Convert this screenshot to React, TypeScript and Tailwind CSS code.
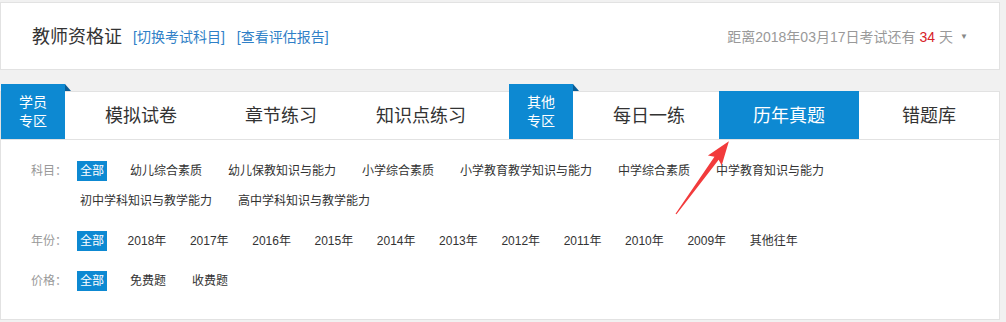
import React, { useState } from "react";

const BLUE = "bg-[#0d89d2]";

const subjects = [
  "全部",
  "幼儿综合素质",
  "幼儿保教知识与能力",
  "小学综合素质",
  "小学教育教学知识与能力",
  "中学综合素质",
  "中学教育知识与能力",
  "初中学科知识与教学能力",
  "高中学科知识与教学能力",
];

const years = [
  "全部",
  "2018年",
  "2017年",
  "2016年",
  "2015年",
  "2014年",
  "2013年",
  "2012年",
  "2011年",
  "2010年",
  "2009年",
  "其他往年",
];

const prices = ["全部", "免费题", "收费题"];

const ZoneLabel: React.FC<{ top: string; bottom: string }> = ({ top, bottom }) => (
  <div
    className={`relative -mt-[8px] flex h-[55px] w-[64px] shrink-0 flex-col items-center justify-center ${BLUE} text-[14px] leading-[19px] text-white`}
  >
    <span>{top}</span>
    <span>{bottom}</span>
    {/* folded corner */}
    <svg className="absolute left-full top-0" width="6" height="7" viewBox="0 0 6 7">
      <polygon points="0,0 6,7 0,7" fill="#0a5d96" />
    </svg>
  </div>
);

const FilterRow: React.FC<{
  label: string;
  items: string[];
  gap: string;
  selected: string;
  onSelect: (v: string) => void;
}> = ({ label, items, gap, selected, onSelect }) => (
  <div className="flex">
    <div className="h-[20px] w-[46px] shrink-0 text-[12px] leading-[20px] text-[#999]">{label}</div>
    <div className={`flex w-[880px] flex-wrap gap-y-[10px] ${gap}`}>
      {items.map((it) => (
        <button
          key={it}
          onClick={() => onSelect(it)}
          className={`h-[20px] px-[3px] text-[12px] leading-[20px] ${
            selected === it ? `${BLUE} text-white` : "text-[#333]"
          }`}
        >
          {it}
        </button>
      ))}
    </div>
  </div>
);

const App: React.FC = () => {
  const [activeTab, setActiveTab] = useState<string>("历年真题");
  const [subject, setSubject] = useState<string>("全部");
  const [year, setYear] = useState<string>("全部");
  const [price, setPrice] = useState<string>("全部");

  const tab = (name: string) => (
    <button
      key={name}
      onClick={() => setActiveTab(name)}
      className={`w-[140px] shrink-0 pt-[2px] text-[18px] ${
        activeTab === name ? `${BLUE} -mt-px h-[48px] text-white` : "h-[47px] text-[#333]"
      }`}
    >
      {name}
    </button>
  );

  return (
    <div className="relative h-[322px] w-[1006px] bg-[#f1f1f1] pt-[2px] font-['Liberation_Sans','Noto_Sans_CJK_SC',sans-serif]">
      {/* header */}
      <div className="flex h-[68px] w-[1000px] items-center border border-[#e2e2e2] bg-white pl-[31px] pr-[31px] pt-[2px]">
        <span className="text-[18px] text-[#333]">教师资格证</span>
        <a className="ml-[11px] text-[14px] text-[#2f7fc7]">[切换考试科目]</a>
        <a className="ml-[12px] text-[14px] text-[#2f7fc7]">[查看评估报告]</a>
        <div className="ml-auto flex items-center text-[14px] text-[#999]">
          <span>距离2018年03月17日考试还有</span>
          <span className="mx-[4px] text-[#d7222a]">34</span>
          <span>天</span>
          <span className="ml-[7px] text-[8px] text-[#888]">▼</span>
        </div>
      </div>

      {/* main card */}
      <div className="mt-[21px] w-[1000px] border border-[#e2e2e2] bg-white">
        <div className="flex h-[48px] border-b border-[#e2e2e2]">
          <ZoneLabel top="学员" bottom="专区" />
          <div className="ml-[6px] flex">{["模拟试卷", "章节练习", "知识点练习"].map(tab)}</div>
          <div className="flex-1" />
          <ZoneLabel top="其他" bottom="专区" />
          <div className="ml-[6px] flex">{["每日一练", "历年真题", "错题库"].map(tab)}</div>
        </div>

        <div className="flex flex-col gap-[20px] pb-[28px] pl-[30px] pt-[21px]">
          <FilterRow label="科目：" items={subjects} gap="gap-x-[20px]" selected={subject} onSelect={setSubject} />
          <FilterRow label="年份：" items={years} gap="gap-x-[17.6px]" selected={year} onSelect={setYear} />
          <FilterRow label="价格：" items={prices} gap="gap-x-[20px]" selected={price} onSelect={setPrice} />
        </div>
      </div>

      {/* annotation arrow */}
      <svg className="pointer-events-none absolute left-0 top-0" width="1006" height="322">
        <g transform="translate(676,214) rotate(-54)">
          <polygon points="0,-0.6 69,-2.6 66,-8.5 90,0 66,8.5 69,2.6 0,0.6" fill="#f23b3c" />
        </g>
      </svg>
    </div>
  );
};

export default App;
